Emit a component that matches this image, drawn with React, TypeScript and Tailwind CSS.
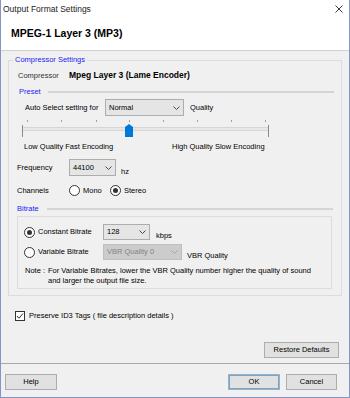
import React from 'react'

function Chevron({ disabled }: { disabled?: boolean }) {
  return (
    <svg width="7" height="4" viewBox="0 0 7 4" className="shrink-0">
      <path d="M0.5 0.5 L3.5 3.5 L6.5 0.5" fill="none" stroke={disabled ? '#a6a6a6' : '#4d4d4d'} strokeWidth="1" />
    </svg>
  )
}

function Combo({ value, className, disabled }: { value: string; className: string; disabled?: boolean }) {
  return (
    <div
      className={
        'flex h-[16px] shrink-0 items-center justify-between border pl-[3px] pr-[3px] ' +
        (disabled ? 'border-[#bfbfbf] bg-[#cccccc] text-[#838383] ' : 'border-[#adadad] bg-[#e5e5e5] ') +
        className
      }
    >
      <span>{value}</span>
      <Chevron disabled={disabled} />
    </div>
  )
}

function Radio({ checked }: { checked?: boolean }) {
  return (
    <div className="flex h-[11px] w-[11px] shrink-0 items-center justify-center rounded-full border border-[#333333] bg-white">
      {checked && <div className="h-[5px] w-[5px] rounded-full bg-[#333333]" />}
    </div>
  )
}

function Button({ label, className }: { label: string; className: string }) {
  return (
    <div className={'flex h-[16px] shrink-0 items-center justify-center border border-[#adadad] bg-[#e1e1e1] ' + className}>
      {label}
    </div>
  )
}

function Slider() {
  const ticks = [6, 40, 75, 108, 142, 176, 210, 244]
  return (
    <svg width="252" height="24" viewBox="0 0 252 24" className="ml-[12px]">
      {ticks.map((x) => (
        <rect key={x} x={x} y="4" width="1" height="2" fill="#a0a0a0" />
      ))}
      <rect x="1.5" y="11.5" width="246" height="3" fill="#e7e7e7" stroke="#d6d6d6" />
      <rect x="1" y="9" width="1" height="12" fill="#8a8a8a" />
      <rect x="247" y="9" width="1" height="12" fill="#8a8a8a" />
      <path d="M104 11 L108 8 L112 11 L112 21 L104 21 Z" fill="#0078d7" />
    </svg>
  )
}

export default function App() {
  return (
    <div className="flex h-[398px] w-[350px] flex-col overflow-hidden border-x border-b border-[#8593cc] bg-[#f0f0f0] font-['Liberation_Sans',Arial,sans-serif] text-[7.5px] leading-none text-black">
      {/* Title + heading */}
      <div className="h-[51px] shrink-0 border-b border-[#cfcfcf] bg-white">
        <div className="flex h-[18px] items-center justify-between pl-[2px] pr-[6px]">
          <span className="text-[8.5px] text-[#222]">Output Format Settings</span>
          <svg width="8" height="8" viewBox="0 0 8 8">
            <path d="M0.5 0.5 L7.5 7.5 M7.5 0.5 L0.5 7.5" stroke="#222" strokeWidth="0.9" />
          </svg>
        </div>
        <div className="flex h-[30px] items-center pl-[10px] text-[10.5px] font-bold">MPEG-1 Layer 3 (MP3)</div>
      </div>

      {/* Compressor settings group */}
      <fieldset className="mx-[7px] mt-[3px] h-[242px] shrink-0 border border-[#dcdcdc]">
        <legend className="ml-[4px] px-[2px] leading-[12px] text-[#2323f5]">Compressor Settings</legend>

        <div className="flex h-[19px] items-center pl-[9px]">
          <span className="w-[51px] text-[#333]">Compressor</span>
          <span className="text-[8.5px] font-bold">Mpeg Layer 3 (Lame Encoder)</span>
        </div>

        {/* Preset */}
        <div className="flex h-[14px] items-center pl-[10px] pr-[7px]">
          <span className="text-[#2323f5]">Preset</span>
          <div className="ml-[7px] h-[2px] flex-1 bg-[#d5d5d5]" />
        </div>

        <div className="flex h-[17px] items-center pl-[16px]">
          <span className="w-[80px]">Auto Select setting for</span>
          <Combo value="Normal" className="h-[17px] w-[79px]" />
          <span className="ml-[6px]">Quality</span>
        </div>

        <Slider />

        <div className="flex h-[14px] items-center pl-[15px]">
          <span className="w-[148px]">Low Quality Fast Encoding</span>
          <span>High Quality Slow Encoding</span>
        </div>

        <div className="mt-[5px] flex h-[17px] items-center pl-[8px]">
          <span className="w-[52px]">Frequency</span>
          <Combo value="44100" className="h-[17px] w-[47px]" />
          <span className="mb-[1px] ml-[5px] self-end">hz</span>
        </div>

        <div className="mt-[7px] flex h-[15px] items-center pl-[8px]">
          <span className="w-[52px]">Channels</span>
          <Radio />
          <span className="ml-[3px] w-[27px]">Mono</span>
          <Radio checked />
          <span className="ml-[3px]">Stereo</span>
        </div>

        {/* Bitrate */}
        <div className="mt-[4px] flex h-[14px] items-center pl-[8px] pr-[8px]">
          <span className="text-[#2323f5]">Bitrate</span>
          <div className="ml-[8px] h-[2px] flex-1 bg-[#d5d5d5]" />
        </div>

        <div className="ml-[8px] h-[73px] w-[315px] border border-[#dcdcdc]">
          <div className="mt-[7px] flex h-[16px] items-center pl-[6px]">
            <Radio checked />
            <span className="ml-[3px] w-[65px]">Constant Bitrate</span>
            <Combo value="128" className="w-[47px]" />
            <span className="mb-[1px] ml-[6px] self-end">kbps</span>
          </div>
          <div className="mt-[4px] flex h-[16px] items-center pl-[6px]">
            <Radio />
            <span className="ml-[3px] w-[65px]">Variable Bitrate</span>
            <Combo value="VBR Quality 0" className="w-[79px]" disabled />
            <span className="mb-[1px] ml-[5px] self-end">VBR Quality</span>
          </div>
          <div className="mt-[6px] flex pl-[7px] leading-[9.5px]">
            <span className="w-[23px] shrink-0">Note :</span>
            <div className="whitespace-nowrap">
              <div>For Variable Bitrates, lower the VBR Quality number higher the quality of sound</div>
              <div>and larger the output file size.</div>
            </div>
          </div>
        </div>
      </fieldset>

      {/* ID3 tags */}
      <div className="mt-[14px] flex h-[11px] shrink-0 items-center pl-[14px]">
        <div className="flex h-[10px] w-[10px] items-center justify-center border border-[#333333] bg-white">
          <svg width="8" height="8" viewBox="0 0 8 8">
            <path d="M1 4 L3 6.2 L7 1.5" fill="none" stroke="#333" strokeWidth="1" />
          </svg>
        </div>
        <span className="ml-[4px]">Preserve ID3 Tags ( file description details )</span>
      </div>

      <div className="mt-[21px] flex shrink-0 justify-end pr-[10px]">
        <Button label="Restore Defaults" className="w-[75px]" />
      </div>

      <div className="mt-[5px] h-px shrink-0 bg-[#a8a8a8]" />

      <div className="mt-[10px] flex shrink-0 items-center">
        <Button label="Help" className="ml-[4px] h-[15px] w-[52px]" />
        <div className="flex-1" />
        <Button label="OK" className="h-[15px] w-[52px] border-[#0078d7] shadow-[inset_0_0_0_1px_#6aa9e0]" />
        <Button label="Cancel" className="ml-[6px] mr-[12px] h-[15px] w-[51px]" />
      </div>
    </div>
  )
}
